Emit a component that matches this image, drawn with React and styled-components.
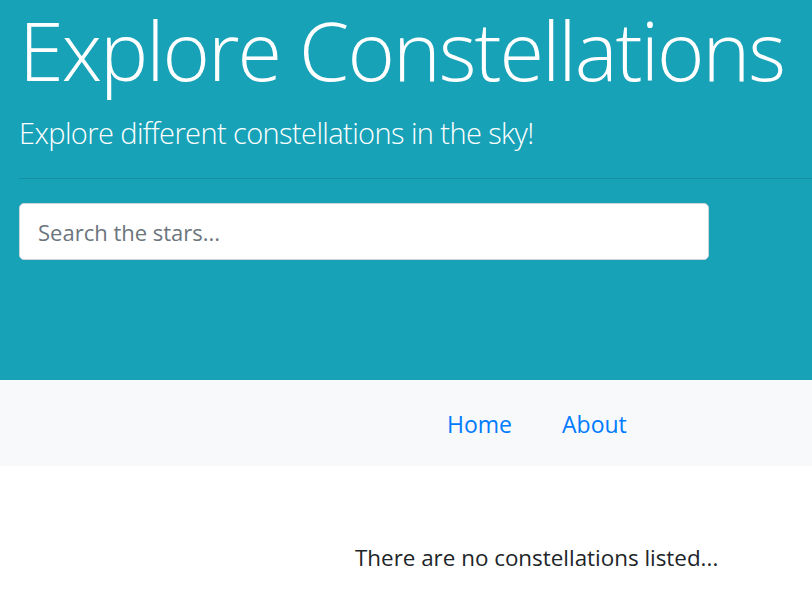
import styled, { createGlobalStyle } from 'styled-components';

const GlobalStyle = createGlobalStyle`
  * {
    box-sizing: border-box;
  }
  body {
    margin: 0;
    padding: 0;
    font-family: "Open Sans", "Noto Sans", sans-serif;
    color: #212529;
    background: #fff;
    overflow: hidden;
  }
`;

const Jumbotron = styled.header`
  background-color: #17a2b8;
  color: #fff;
  height: 380px;
  padding: 0 0 0 19px;
`;

const Title = styled.h1`
  margin: 0;
  font-size: 81px;
  font-weight: 300;
  line-height: 100px;
  white-space: nowrap;
  letter-spacing: -2px;
`;

const Lead = styled.p`
  margin: 13px 0 0;
  font-size: 29px;
  font-weight: 300;
  line-height: 40px;
  white-space: nowrap;
  letter-spacing: -0.6px;
`;

const Rule = styled.hr`
  margin: 25px 0 24px;
  border: 0;
  border-top: 1px solid rgba(0, 0, 0, 0.1);
`;

const Search = styled.input`
  display: block;
  width: 690px;
  height: 57px;
  padding: 0 18px;
  font-family: inherit;
  font-size: 22px;
  color: #495057;
  background: #fff;
  border: 1px solid #ced4da;
  border-radius: 5px;
  outline: none;

  &::placeholder {
    color: #6c757d;
  }
`;

const Nav = styled.nav`
  background-color: #f8f9fa;
  height: 86px;
  display: flex;
  align-items: center;
  padding: 2px 0 0 447px;
`;

const NavList = styled.ul`
  list-style: none;
  margin: 0;
  padding: 0;
  display: flex;
  gap: 50px;
`;

const NavLink = styled.a`
  color: #007bff;
  text-decoration: none;
  font-size: 23px;
  line-height: 32px;
`;

const Empty = styled.main`
  padding: 76px 0 0 355px;
  font-size: 22.4px;
  line-height: 32px;
`;

export default function App() {
  return (
    <>
      <GlobalStyle />
      <Jumbotron>
        <Title>Explore Constellations</Title>
        <Lead>Explore different constellations in the sky!</Lead>
        <Rule />
        <Search type="text" placeholder="Search the stars..." />
      </Jumbotron>
      <Nav>
        <NavList>
          <li><NavLink href="#">Home</NavLink></li>
          <li><NavLink href="#">About</NavLink></li>
        </NavList>
      </Nav>
      <Empty>There are no constellations listed...</Empty>
    </>
  );
}
